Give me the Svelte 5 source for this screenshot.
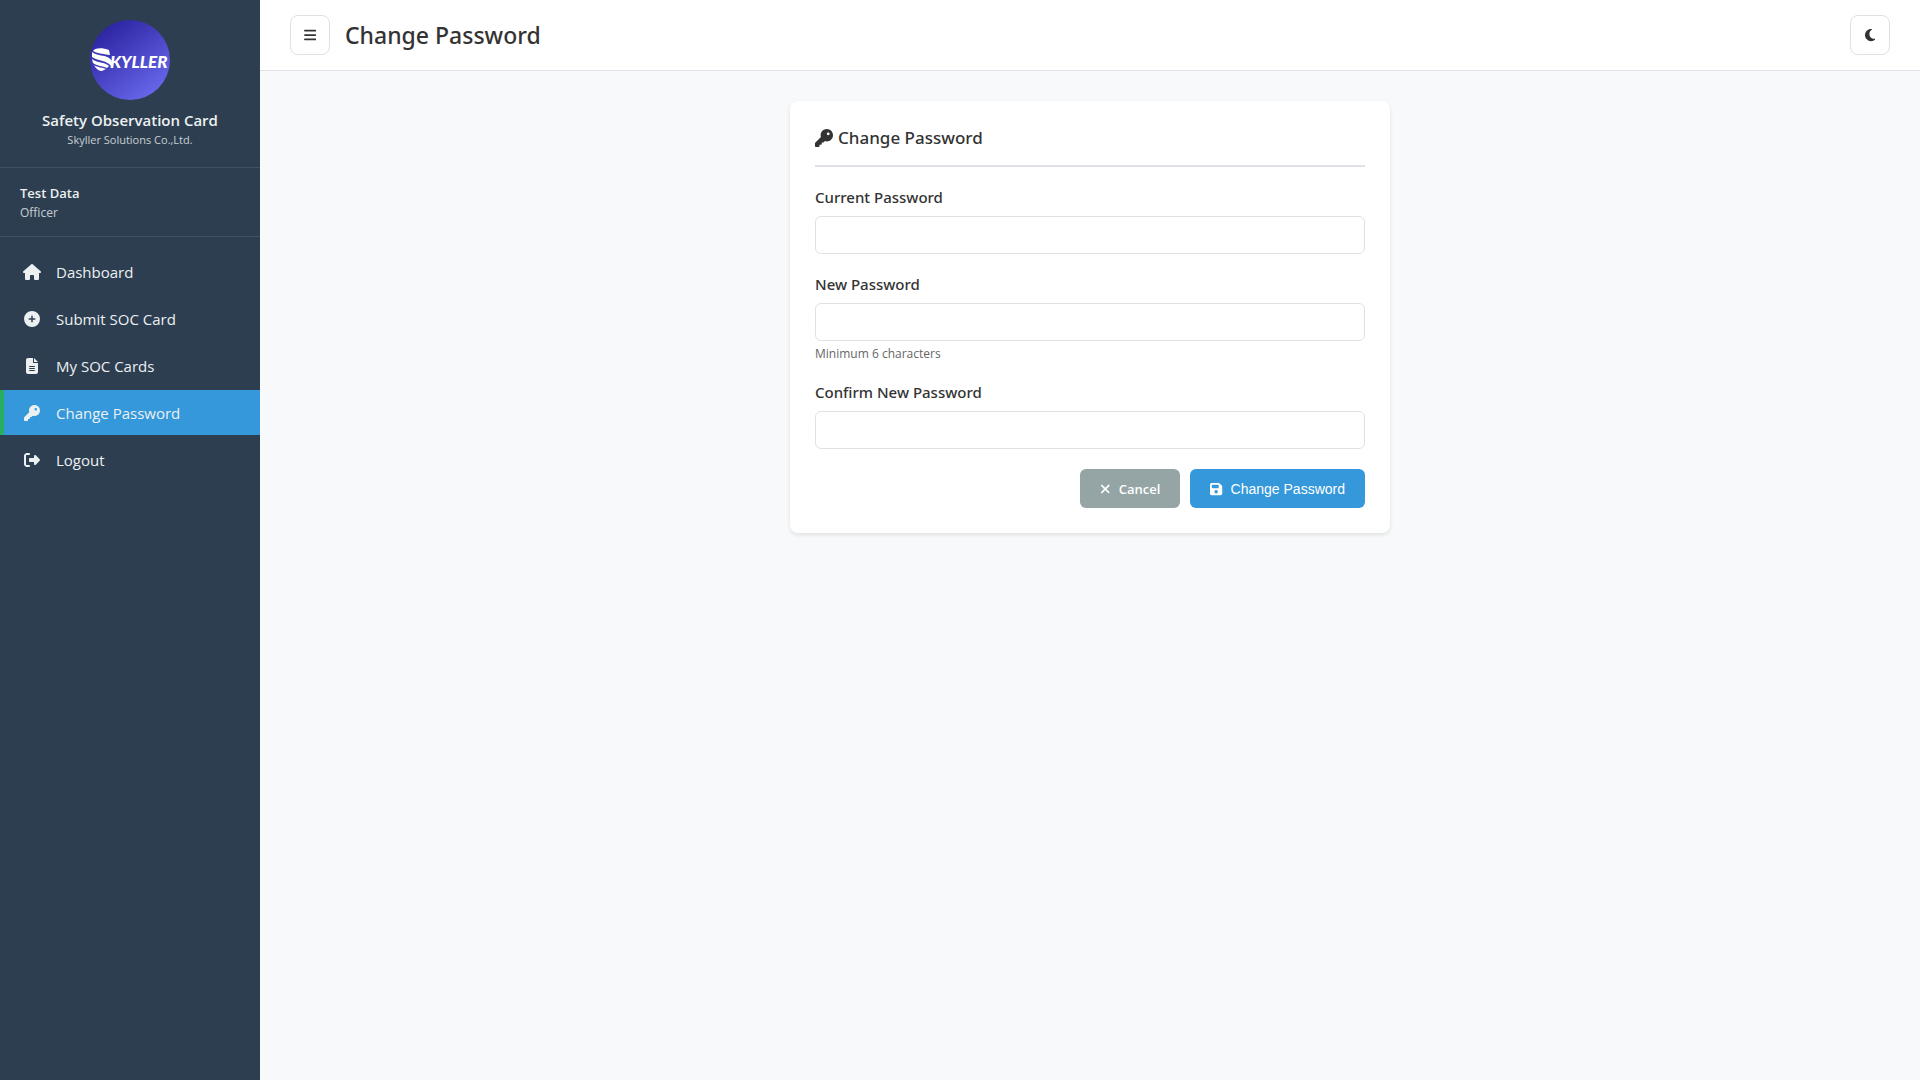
<!--
  Change Password page

  Sidebar navigation, top bar and the password form.
-->
<script lang="ts">
  interface Icon {
    width: number;
    path: string;
  }

  interface NavItem {
    label: string;
    href: string;
    icon: Icon;
    active?: boolean;
  }

  // ==========================================================================
  // ICONS (all on a 512 high grid)
  // ==========================================================================

  const icons = {
    house: {
      width: 576,
      path: 'M575.8 255.5c0 18-15 32.1-32 32.1h-32l.7 160.2c0 2.7-.2 5.4-.5 8.1V472c0 22.1-17.9 40-40 40H456c-1.1 0-2.2 0-3.3-.1c-1.4 .1-2.8 .1-4.2 .1H416 392c-22.1 0-40-17.9-40-40V448 384c0-17.7-14.3-32-32-32H256c-17.7 0-32 14.3-32 32v64 24c0 22.1-17.9 40-40 40H160 128.1c-1.5 0-3-.1-4.5-.2c-1.2 .1-2.4 .2-3.6 .2H104c-22.1 0-40-17.9-40-40V360c0-.9 0-1.9 .1-2.8V287.6H32c-18 0-32-14-32-32.1c0-9 3-17 10-24L266.4 8c7-7 15-8 22-8s15 2 21 7L564.8 231.5c8 7 12 15 11 24z',
    },
    plus: {
      width: 512,
      path: 'M256 512A256 256 0 1 0 256 0a256 256 0 1 0 0 512zM232 344V280H168c-13.3 0-24-10.7-24-24s10.7-24 24-24h64V168c0-13.3 10.7-24 24-24s24 10.7 24 24v64h64c13.3 0 24 10.7 24 24s-10.7 24-24 24H280v64c0 13.3-10.7 24-24 24s-24-10.7-24-24z',
    },
    file: {
      width: 384,
      path: 'M64 0C28.7 0 0 28.7 0 64V448c0 35.3 28.7 64 64 64H320c35.3 0 64-28.7 64-64V160H256c-17.7 0-32-14.3-32-32V0H64zM256 0V128H384L256 0zM112 256H272c8.8 0 16 7.2 16 16s-7.2 16-16 16H112c-8.8 0-16-7.2-16-16s7.2-16 16-16zm0 64H272c8.8 0 16 7.2 16 16s-7.2 16-16 16H112c-8.8 0-16-7.2-16-16s7.2-16 16-16zm0 64H272c8.8 0 16 7.2 16 16s-7.2 16-16 16H112c-8.8 0-16-7.2-16-16s7.2-16 16-16z',
    },
    key: {
      width: 512,
      path: 'M336 352c97.2 0 176-78.8 176-176S433.2 0 336 0S160 78.8 160 176c0 18.7 2.9 36.8 8.3 53.7L7 391c-4.5 4.5-7 10.6-7 17v80c0 13.3 10.7 24 24 24h80c13.3 0 24-10.7 24-24V448h40c13.3 0 24-10.7 24-24V384h40c6.4 0 12.5-2.5 17-7l33.3-33.3c16.9 5.4 35 8.3 53.7 8.3zM376 96a40 40 0 1 1 0 80 40 40 0 1 1 0-80z',
    },
    logout: {
      width: 512,
      path: 'M377.9 105.9L500.7 228.7c7.2 7.2 11.3 17.1 11.3 27.3s-4.1 20.1-11.3 27.3L377.9 406.1c-6.4 6.4-15 9.9-24 9.9c-18.7 0-33.9-15.2-33.9-33.9l0-62.1-128 0c-17.7 0-32-14.3-32-32l0-64c0-17.7 14.3-32 32-32l128 0 0-62.1c0-18.7 15.2-33.9 33.9-33.9c9 0 17.6 3.6 24 9.9zM160 96L96 96c-17.7 0-32 14.3-32 32l0 256c0 17.7 14.3 32 32 32l64 0c17.7 0 32 14.3 32 32s-14.3 32-32 32l-64 0c-53 0-96-43-96-96L0 128C0 75 43 32 96 32l64 0c17.7 0 32 14.3 32 32s-14.3 32-32 32z',
    },
    bars: {
      width: 448,
      path: 'M0 96C0 78.3 14.3 64 32 64H416c17.7 0 32 14.3 32 32s-14.3 32-32 32H32C14.3 128 0 113.7 0 96zM0 256c0-17.7 14.3-32 32-32H416c17.7 0 32 14.3 32 32s-14.3 32-32 32H32c-17.7 0-32-14.3-32-32zM448 416c0 17.7-14.3 32-32 32H32c-17.7 0-32-14.3-32-32s14.3-32 32-32H416c17.7 0 32 14.3 32 32z',
    },
    moon: {
      width: 384,
      path: 'M223.5 32C100 32 0 132.3 0 256S100 480 223.5 480c60.6 0 115.5-24.2 155.8-63.4c5-4.9 6.3-12.5 3.1-18.7s-10.1-9.7-17-8.5c-9.8 1.7-19.8 2.6-30.1 2.6c-96.9 0-175.5-78.8-175.5-176c0-65.8 36-123.1 89.3-153.3c6.1-3.5 9.2-10.5 7.7-17.3s-7.3-11.9-14.3-12.5c-6.3-.5-12.6-.8-19-.8z',
    },
    xmark: {
      width: 384,
      path: 'M342.6 150.6c12.5-12.5 12.5-32.8 0-45.3s-32.8-12.5-45.3 0L192 210.7 86.6 105.4c-12.5-12.5-32.8-12.5-45.3 0s-12.5 32.8 0 45.3L146.7 256 41.4 361.4c-12.5 12.5-12.5 32.8 0 45.3s32.8 12.5 45.3 0L192 301.3 297.4 406.6c12.5 12.5 32.8 12.5 45.3 0s12.5-32.8 0-45.3L237.3 256 342.6 150.6z',
    },
    save: {
      width: 448,
      path: 'M64 32C28.7 32 0 60.7 0 96V416c0 35.3 28.7 64 64 64H384c35.3 0 64-28.7 64-64V173.3c0-17-6.7-33.3-18.7-45.3L352 50.7C340 38.7 323.7 32 306.7 32H64zm0 96c0-17.7 14.3-32 32-32H288c17.7 0 32 14.3 32 32v64c0 17.7-14.3 32-32 32H96c-17.7 0-32-14.3-32-32V128zM224 288a64 64 0 1 1 0 128 64 64 0 1 1 0-128z',
    },
  };

  const navItems: NavItem[] = [
    { label: 'Dashboard', href: '#dashboard', icon: icons.house },
    { label: 'Submit SOC Card', href: '#submit', icon: icons.plus },
    { label: 'My SOC Cards', href: '#cards', icon: icons.file },
    { label: 'Change Password', href: '#password', icon: icons.key, active: true },
    { label: 'Logout', href: '#logout', icon: icons.logout },
  ];

  // ==========================================================================
  // STATE
  // ==========================================================================

  let sidebarOpen = $state(true);
  let currentPassword = $state('');
  let newPassword = $state('');
  let confirmPassword = $state('');

  function handleSubmit(e: SubmitEvent) {
    e.preventDefault();
  }

  function reset() {
    currentPassword = '';
    newPassword = '';
    confirmPassword = '';
  }
</script>

{#snippet glyph(icon: Icon)}
  <svg class="icon" viewBox="0 0 {icon.width} 512" aria-hidden="true">
    <path d={icon.path} />
  </svg>
{/snippet}

<div class="layout">
  {#if sidebarOpen}
    <aside class="sidebar">
      <div class="brand">
        <svg class="logo" viewBox="0 0 80 80" role="img" aria-label="Skyller">
          <defs>
            <linearGradient id="logo-bg" x1="0.15" y1="0.1" x2="0.8" y2="0.95">
              <stop offset="0" stop-color="#2c23a0" />
              <stop offset="1" stop-color="#6868ec" />
            </linearGradient>
          </defs>
          <circle cx="40" cy="40" r="40" fill="url(#logo-bg)" />
          <!-- striped ball in front of the wordmark -->
          <g fill="#fff">
            <path d="M3 31C4 28 12 27 19 30L20 35C15 34 8 34 3 31Z" />
            <path d="M2 32C7 36 15 35 19 38C22 40 23 43 21 46C17 40 7 41 2 37Z" />
            <path d="M2 39C7 43 15 42 19 46L17 48C12 46 7 46 3 43Z" />
            <path d="M4 45C8 48 12 47 16 49L12 51C9 51 6 49 4 45Z" />
          </g>
          <text class="wordmark" x="20" y="48">KYLLER</text>
        </svg>
        <h2>Safety Observation Card</h2>
        <p>Skyller Solutions Co.,Ltd.</p>
      </div>

      <div class="user">
        <div class="user-name">Test Data</div>
        <div class="user-role">Officer</div>
      </div>

      <nav class="menu">
        {#each navItems as item}
          <a href={item.href} class:active={item.active}>
            <span class="menu-icon">{@render glyph(item.icon)}</span>
            {item.label}
          </a>
        {/each}
      </nav>
    </aside>
  {/if}

  <div class="main">
    <header class="topbar">
      <button class="square" aria-label="Toggle menu" onclick={() => (sidebarOpen = !sidebarOpen)}>
        {@render glyph(icons.bars)}
      </button>
      <h1>Change Password</h1>
      <button class="square" aria-label="Dark mode">{@render glyph(icons.moon)}</button>
    </header>

    <main class="content">
      <form class="card" onsubmit={handleSubmit}>
        <h2 class="card-title">{@render glyph(icons.key)} Change Password</h2>

        <div class="field">
          <label for="current">Current Password</label>
          <input id="current" type="password" bind:value={currentPassword} />
        </div>

        <div class="field">
          <label for="new">New Password</label>
          <input id="new" type="password" bind:value={newPassword} aria-describedby="new-hint" />
          <small id="new-hint">Minimum 6 characters</small>
        </div>

        <div class="field">
          <label for="confirm">Confirm New Password</label>
          <input id="confirm" type="password" bind:value={confirmPassword} />
        </div>

        <div class="actions">
          <button type="button" class="btn cancel" onclick={reset}>{@render glyph(icons.xmark)} Cancel</button>
          <button type="submit" class="btn primary">{@render glyph(icons.save)} Change Password</button>
        </div>
      </form>
    </main>
  </div>
</div>

<style>
  :global(body) {
    margin: 0;
    background: #f8f9fb;
    color: #333;
    font-family: 'Segoe UI', 'Open Sans', 'Noto Sans', sans-serif;
  }

  h1,
  h2,
  p {
    margin: 0;
  }

  .icon {
    display: block;
    height: 16px;
    fill: currentColor;
  }

  .layout {
    display: flex;
    min-height: 100vh;
  }

  /* Sidebar */
  .sidebar {
    width: 260px;
    flex-shrink: 0;
    background: #2c3e50;
    color: #ecf0f1;
  }

  .brand {
    display: flex;
    flex-direction: column;
    align-items: center;
    padding: 20px;
    border-bottom: 1px solid rgba(255, 255, 255, 0.1);
  }

  .logo {
    width: 80px;
    height: 80px;
    margin-bottom: 10px;
  }

  .wordmark {
    font-family: Lato, sans-serif;
    font-size: 17px;
    font-weight: 900;
    font-style: italic;
    fill: #fff;
  }

  .brand h2 {
    margin-bottom: 2px;
    font-size: 15px;
    font-weight: 600;
    line-height: 20px;
  }

  .brand p {
    font-size: 11px;
    line-height: 15px;
    opacity: 0.8;
  }

  .user {
    padding: 15px 20px;
    border-bottom: 1px solid rgba(255, 255, 255, 0.1);
  }

  .user-name {
    margin-bottom: 2px;
    font-size: 13px;
    font-weight: 600;
    line-height: 20px;
  }

  .user-role {
    font-size: 12px;
    line-height: 16px;
    opacity: 0.8;
  }

  .menu {
    display: flex;
    flex-direction: column;
    gap: 2px;
    padding: 12px 0;
  }

  .menu a {
    display: flex;
    align-items: center;
    gap: 12px;
    height: 45px;
    padding: 0 16px;
    border-left: 4px solid transparent;
    color: #ecf0f1;
    font-size: 15px;
    text-decoration: none;
  }

  .menu a:hover,
  .menu a.active {
    background: #3498db;
    border-left-color: #27ae60;
  }

  .menu-icon {
    display: flex;
    justify-content: center;
    width: 24px;
  }

  /* Top bar */
  .main {
    flex: 1;
    min-width: 0;
  }

  .topbar {
    display: flex;
    align-items: center;
    gap: 15px;
    padding: 15px 30px;
    background: #fff;
    border-bottom: 1px solid #dee2e6;
  }

  .topbar h1,
  .card-title,
  .field label {
    font-family: 'Segoe UI', 'Noto Sans', 'Open Sans', sans-serif;
    font-weight: 500;
  }

  .topbar h1 {
    flex: 1;
    font-size: 23px;
    line-height: 32px;
  }

  .square {
    display: flex;
    align-items: center;
    justify-content: center;
    width: 40px;
    height: 40px;
    padding: 0;
    background: #fff;
    border: 1px solid #dee2e6;
    border-radius: 8px;
    color: #333;
    cursor: pointer;
  }

  .square .icon {
    height: 14px;
  }

  /* Form */
  .content {
    padding: 30px;
  }

  .card {
    max-width: 600px;
    margin: 0 auto;
    padding: 25px;
    box-sizing: border-box;
    background: #fff;
    border-radius: 8px;
    box-shadow: 0 2px 4px rgba(0, 0, 0, 0.1);
  }

  .card-title {
    display: flex;
    align-items: center;
    gap: 5px;
    margin-bottom: 20px;
    padding-bottom: 15px;
    border-bottom: 2px solid #dee2e6;
    font-size: 17px;
    line-height: 24px;
  }

  .card-title .icon {
    height: 18px;
  }

  .field {
    margin-bottom: 20px;
  }

  .field label {
    display: block;
    margin-bottom: 8px;
    font-size: 15px;
    line-height: 21px;
  }

  .field input {
    display: block;
    width: 100%;
    height: 38px;
    padding: 0 12px;
    box-sizing: border-box;
    background: #fff;
    border: 1px solid #dee2e6;
    border-radius: 6px;
    color: #333;
    font-size: 14px;
  }

  .field input:focus {
    outline: none;
    border-color: #3498db;
  }

  .field small {
    display: block;
    margin-top: 5px;
    color: #666;
    font-size: 12px;
    line-height: 16px;
  }

  .actions {
    display: flex;
    justify-content: flex-end;
    gap: 10px;
  }

  .btn {
    display: flex;
    align-items: center;
    gap: 8px;
    height: 39px;
    padding: 0 20px;
    border: none;
    border-radius: 6px;
    color: #fff;
    font-family: 'Liberation Sans', Arial, sans-serif;
    font-size: 14px;
    cursor: pointer;
  }

  .btn .icon {
    height: 14px;
  }

  .cancel {
    background: #95a5a6;
    font-family: inherit;
    font-size: 13px;
    font-weight: 600;
  }

  .primary {
    background: #3498db;
  }
</style>
